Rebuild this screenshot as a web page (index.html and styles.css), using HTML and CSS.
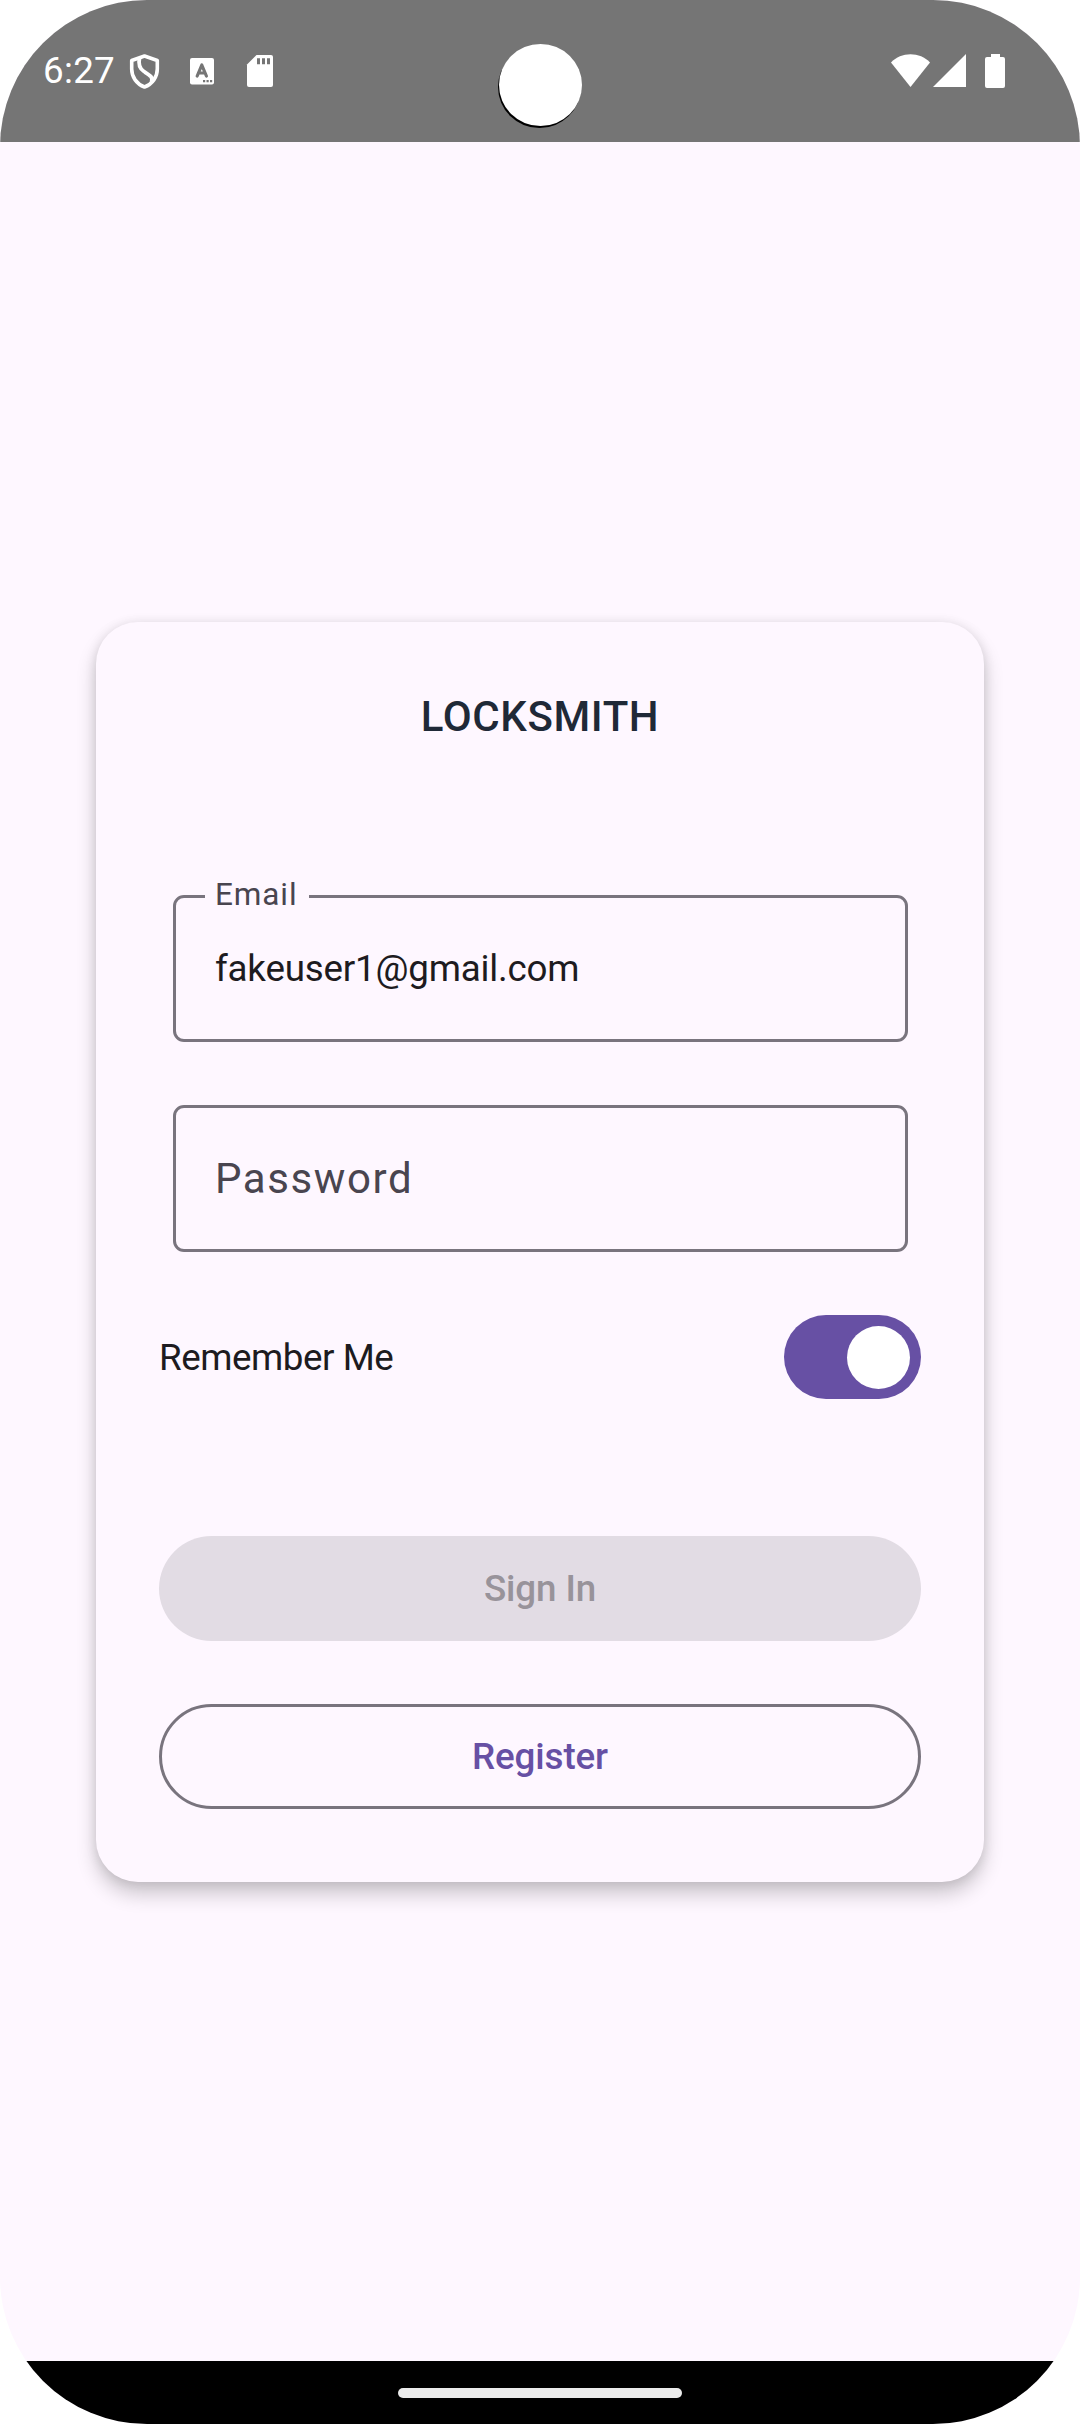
FILE: index.html
```html
<!DOCTYPE html>
<html lang="en">
<head>
<meta charset="utf-8">
<title>Locksmith</title>
<link rel="stylesheet" href="styles.css">
</head>
<body>
<div class="phone">
  <header class="status">
    <span class="clock">6:27</span>
    <svg class="status-left" width="150" height="40" viewBox="127 52 150 40">
      <path d="M144.500 56L131.700 60.500V69C131.700 77 136.500 84 144.500 87C152.500 84 157.300 77 157.300 69V60.500Z" fill="none" stroke="#fff" stroke-width="3.600" stroke-linejoin="round"/>
      <path d="M139.500 58C138 65 140 69 144 71.500C149.500 75 153.500 77 151.500 82" fill="none" stroke="#fff" stroke-width="3.800"/>
      <rect x="190" y="58" width="24" height="26.500" rx="2" fill="#fff"/>
      <path d="M197.200 76L201.800 65L206.400 76M198.800 73H204.800" fill="none" stroke="#757575" stroke-width="3.200" stroke-linecap="round" stroke-linejoin="round"/>
      <path d="M203 80h2.200v2.200H203zM206.500 80h2.200v2.200h-2.200zM210 80h2.200v2.200H210z" fill="#757575"/>
      <path d="M256.500 55H271a2 2 0 0 1 2 2V85a2 2 0 0 1-2 2H249a2 2 0 0 1-2-2V64.500Z" fill="#fff"/>
      <path d="M257 58.300h3v6h-3zM262 58.300h3v6h-3zM267 58.300h3v6h-3z" fill="#757575"/>
    </svg>
    <svg class="status-right" width="118" height="40" viewBox="889 52 118 40">
      <path d="M891 62.500C901 51.500 920 51.500 930 62.500L910.500 87Z" fill="#fff"/>
      <path d="M966 54V87H933Z" fill="#fff"/>
      <path d="M991 54h9v3h3a2 2 0 0 1 2 2V86a2 2 0 0 1-2 2H987a2 2 0 0 1-2-2V59a2 2 0 0 1 2-2h4Z" fill="#fff"/>
    </svg>
    <div class="camera"></div>
  </header>
  <main class="screen">
    <form class="card">
      <h1 class="title">LOCKSMITH</h1>
      <div class="field">
        <label class="field-label">Email</label>
        <span class="field-value">fakeuser1@gmail.com</span>
      </div>
      <div class="field">
        <span class="field-placeholder">Password</span>
      </div>
      <div class="remember">
        <span class="remember-text">Remember Me</span>
        <div class="switch"><div class="thumb"></div></div>
      </div>
      <div class="button button-disabled">Sign In</div>
      <div class="button button-outlined">Register</div>
    </form>
  </main>
  <footer class="nav"><div class="handle"></div></footer>
</div>
</body>
</html>
```
FILE: styles.css
```css
* { box-sizing: border-box; }
body { margin: 0; background: #fff; font-family: Roboto, sans-serif; color: #1d1b20; }
.phone { width: 1080px; height: 2424px; display: flex; flex-direction: column; border-radius: 147px; overflow: hidden; background: #fef7ff; }

.status { position: relative; height: 142px; flex: none; display: flex; background: #757575; color: #fff; padding: 52px 73px 0 43px; }
.clock { width: 84px; font-size: 36.75px; line-height: 37px; letter-spacing: .3px; }
.status-left, .status-right { flex: none; }
.status-right { margin-left: auto; }
.camera { position: absolute; left: 499px; top: 44px; width: 83px; height: 82px; border-radius: 50%; background: #fff; box-shadow: -1px 2px 0 #000; }

.screen { flex: 1; padding: 480px 96px 0; }
.card { height: 1260px; padding: 70px 63px 0; display: flex; flex-direction: column; border-radius: 42px; background: #fef7ff; box-shadow: 0 12px 20px rgba(0, 0, 0, .2), 0 1px 12px rgba(0, 0, 0, .1); }
.title { margin: 0 0 153px; font-size: 42px; line-height: 50px; font-weight: 500; text-align: center; color: #1f2937; letter-spacing: .6px; }
.field { position: relative; height: 147px; margin: 0 13px 63px 14px; padding-left: 39px; display: flex; align-items: center; border: 3px solid #79747e; border-radius: 11px; }
.field-label { position: absolute; left: 29px; top: -22px; width: 104px; padding-left: 10px; font-size: 31.5px; line-height: 37px; letter-spacing: .9px; color: #49454f; background: #fef7ff; }
.field-value { font-size: 36.75px; letter-spacing: -.2px; }
.field-placeholder { font-size: 42px; letter-spacing: 1.6px; color: #49454f; }
.remember { height: 84px; margin-bottom: 137px; display: flex; align-items: center; justify-content: space-between; }
.remember-text { font-size: 36.75px; letter-spacing: -.45px; }
.switch { width: 137px; height: 84px; padding-right: 11px; display: flex; align-items: center; justify-content: flex-end; border-radius: 42px; background: #6750a4; }
.thumb { width: 63px; height: 63px; border-radius: 50%; background: #fff; }
.button { height: 105px; display: flex; align-items: center; justify-content: center; border-radius: 53px; font-size: 36.75px; font-weight: 500; letter-spacing: -.1px; }
.button-disabled { margin-bottom: 63px; background: #e2dce4; color: #98939a; }
.button-outlined { border: 3px solid #79747e; color: #6750a4; }

.nav { height: 63px; flex: none; display: flex; align-items: flex-start; justify-content: center; padding-top: 27px; background: #000; }
.handle { width: 284px; height: 10px; border-radius: 5px; background: #ebebeb; }
```
